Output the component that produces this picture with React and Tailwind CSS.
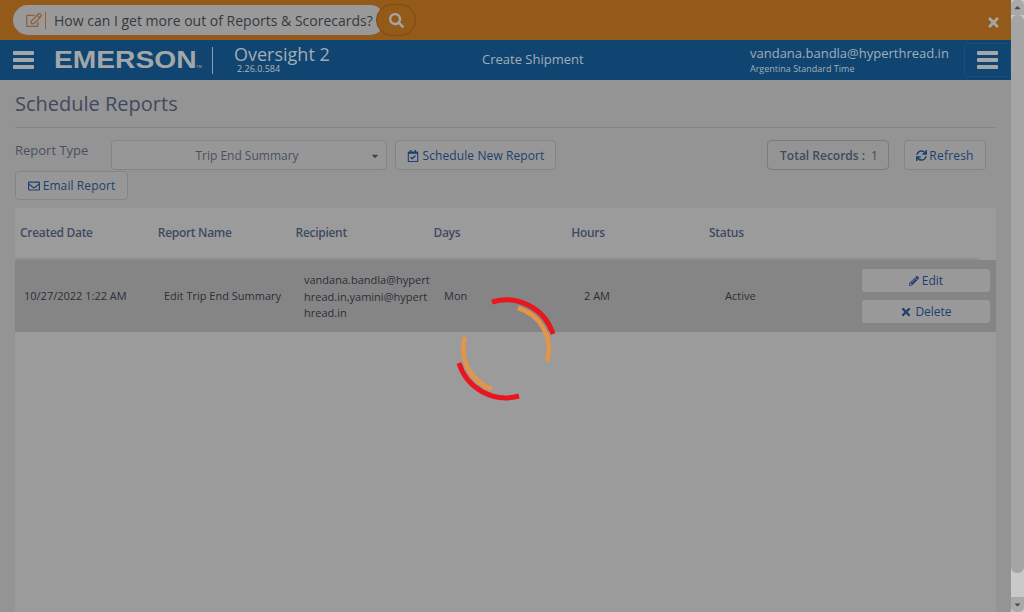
import React from "react";
import {
  FaRegEdit,
  FaSearch,
  FaTimes,
  FaCaretDown,
  FaRegCalendarCheck,
  FaRegEnvelope,
  FaSync,
  FaPencilAlt,
  FaCaretUp,
} from "react-icons/fa";

const Bars = () => (
  <div className="flex flex-col gap-[3px] w-[21px]">
    <span className="h-[4px] bg-[#a3a7aa] rounded-[1px]" />
    <span className="h-[4px] bg-[#a3a7aa] rounded-[1px]" />
    <span className="h-[4px] bg-[#a3a7aa] rounded-[1px]" />
  </div>
);

const OutlineButton = ({ className, children }) => (
  <button className={`border border-[#848484] rounded-[4px] bg-[#979797] text-[12px] pt-px text-[#1d4070] flex items-center justify-center ${className}`}>
    {children}
  </button>
);

const columns = ["Created Date", "Report Name", "Recipient", "Days", "Hours", "Status"];

const Spinner = () => (
  <svg className="absolute left-[450px] top-[290px]" width="112" height="116" viewBox="0 0 112 116" fill="none">
    <path d="M42 12 A49 49 0 0 1 103 44" stroke="#e8161e" strokeWidth="5" />
    <path d="M9 73 A49 49 0 0 0 69 106" stroke="#e8161e" strokeWidth="5" />
    <path d="M68 18 A42.5 42.5 0 0 1 97 71" stroke="#e5954a" strokeWidth="4.5" />
    <path d="M15 47 A42.5 42.5 0 0 0 42 99" stroke="#e5954a" strokeWidth="4.5" />
  </svg>
);

export default function App() {
  return (
    <div className="relative flex h-[612px] overflow-hidden bg-[#949494] font-['Open_Sans',sans-serif]">
      <div className="flex-1 min-w-0 flex flex-col">
        {/* banner */}
        <div className="h-10 shrink-0 bg-[#945a19] flex items-center pl-[13px] relative">
          <div className="h-[30px] w-[372px] rounded-full bg-[#999999] flex items-center pl-[12px]">
            <FaRegEdit className="text-[#94603a] text-[16px] ml-[1px]" />
            <span className="w-px h-[17px] bg-[#94603a] ml-[3px] mr-[8px]" />
            <span className="text-[14px] text-[#33393f] whitespace-nowrap">How can I get more out of Reports &amp; Scorecards?</span>
          </div>
          <div className="w-[40px] h-[32px] -ml-[9px] rounded-full bg-[#945a19] border border-[#7c4a12] flex items-center justify-center">
            <FaSearch className="text-[#a5a5a5] text-[15px]" />
          </div>
          <FaTimes className="absolute right-[10px] top-[15px] text-[#a5a5a5] text-[15px]" />
        </div>

        {/* nav */}
        <div className="h-10 shrink-0 bg-[#104571] flex items-center relative">
          <div className="ml-[13px]"><Bars /></div>
          <div className="ml-[20px] w-[143px] relative font-['Liberation_Sans',sans-serif] font-bold text-[24px] leading-none text-[#a3a7aa] whitespace-nowrap">
            <span className="inline-block origin-left scale-x-[1.175]">EMERSON</span>
            <span className="absolute left-[142px] bottom-[3px] text-[4px] font-normal">TM</span>
          </div>
          <span className="w-px h-[27px] bg-[#8a9bab] ml-[15px]" />
          <div className="ml-[21px] w-[120px] text-[#a3adb6]">
            <div className="text-[18px] leading-[20px] mt-[-2px]">Oversight 2</div>
            <div className="text-[9px] leading-[10px] ml-[3px] text-[#b0b5ba]">2.26.0.584</div>
          </div>
          <div className="ml-[128px] w-[268px] text-[13px] text-[#a3adb6] whitespace-nowrap">Create Shipment</div>
          <div className="text-[#a3adb6] w-[214px]">
            <div className="text-[13px] leading-[16px] whitespace-nowrap">vandana.bandla@hyperthread.in</div>
            <div className="text-[9px] leading-[12px] mt-[2px] whitespace-nowrap">Argentina Standard Time</div>
          </div>
          <div className="absolute right-0 top-[3px] w-[47px] h-[34px] border border-[#1a4e79] rounded-[3px] flex items-center justify-center">
            <Bars />
          </div>
        </div>

        {/* page */}
        <div className="flex-1 min-h-0 pl-[15px] pr-[15px] flex flex-col">
          <h1 className="text-[20px] leading-[27px] text-[#3f4a5f] mt-[10px]">Schedule Reports</h1>
          <div className="h-px bg-[#858585] mt-[10px]" />

          <div className="flex mt-[12px]">
            <div className="w-[96px] text-[13px] leading-[18px] mt-[1px] text-[#4a5060]">Report Type</div>
            <div className="w-[276px] h-[30px] border border-[#848484] rounded-[4px] bg-[#979797] relative flex items-center justify-center pt-px text-[12px] text-[#4a5060] pr-[4px]">
              Trip End Summary
              <FaCaretDown className="absolute right-[6px] top-[10px] text-[#3f4758] text-[10px]" />
            </div>
            <OutlineButton className="w-[161px] h-[30px] ml-[8px] tracking-[0.1px]">
              <FaRegCalendarCheck className="text-[12px] mr-[4px]" />
              Schedule New Report
            </OutlineButton>
            <div className="ml-[211px] w-[122px] h-[30px] border border-[#7b7b7b] rounded-[4px] flex items-center justify-center pt-px pl-[2px] text-[12px] font-semibold text-[#3f4a5f]">
              Total Records :<span className="font-normal ml-[6px]">1</span>
            </div>
            <OutlineButton className="ml-[15px] w-[82px] h-[30px] tracking-[0.2px]">
              <FaSync className="text-[11px] mr-[2px]" />
              Refresh
            </OutlineButton>
          </div>
          <OutlineButton className="w-[113px] h-[29px] mt-px tracking-[0.1px]">
            <FaRegEnvelope className="text-[12px] mr-[3px]" />
            Email Report
          </OutlineButton>

          {/* table */}
          <div className="flex-1 mt-[8px] bg-[#9b9b9b]">
            <div className="h-[50px] flex items-center pl-[5px] text-[12px] tracking-[-0.3px] font-semibold text-[#3f4a5f]">
              {columns.map((c) => (
                <div key={c} className="w-[137.8px]">{c}</div>
              ))}
            </div>
            <div className="h-[2px] bg-[#8f8f8f] mr-[16px]" />
            <div className="h-[72px] bg-[#858585] flex items-center pl-[9px] text-[11px] text-[#2a2f38]">
              <div className="w-[140px]">10/27/2022 1:22 AM</div>
              <div className="w-[140px]">Edit Trip End Summary</div>
              <div className="w-[140px] pr-[12px] pt-[2px] leading-[16.5px] break-all">vandana.bandla@hyperthread.in,yamini@hyperthread.in</div>
              <div className="w-[140px]">Mon</div>
              <div className="w-[141px]">2 AM</div>
              <div className="w-[137px]">Active</div>
              <div className="w-[128px] flex flex-col gap-[8px]">
                <button className="h-[23px] rounded-[3px] bg-[#999999] text-[12px] text-[#1d4070] flex items-center justify-center">
                  <FaPencilAlt className="text-[10px] mr-[3px]" />
                  Edit
                </button>
                <button className="h-[23px] rounded-[3px] bg-[#999999] text-[12px] text-[#1d4070] flex items-center justify-center">
                  <FaTimes className="text-[12px] mr-[3px]" />
                  Delete
                </button>
              </div>
            </div>
          </div>
        </div>
      </div>

      {/* scrollbar */}
      <div className="w-[13px] shrink-0 bg-[#c9c9c9] flex flex-col">
        <div className="h-[15px] bg-[#a9a9a9] flex items-center justify-center rounded-t-[5px]">
          <FaCaretUp className="text-[#4a4a4a] text-[9px]" />
        </div>
        <div className="h-[558px] bg-[#a5a5a5] rounded-[6px]" />
        <div className="flex-1" />
        <div className="h-[15px] bg-[#a9a9a9] flex items-center justify-center rounded-b-[5px]">
          <FaCaretDown className="text-[#4a4a4a] text-[9px]" />
        </div>
      </div>

      <Spinner />
    </div>
  );
}
